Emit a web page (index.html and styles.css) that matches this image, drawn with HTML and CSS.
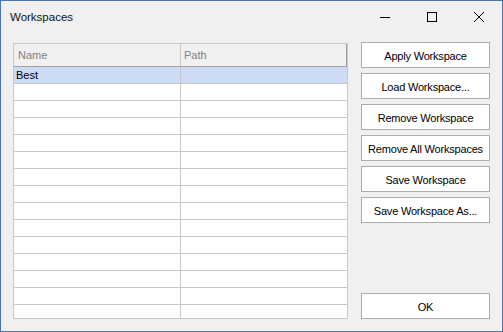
FILE: index.html
```html
<!DOCTYPE html>
<html lang="en">
<head>
  <meta charset="UTF-8" />
  <title>Workspaces</title>
  <link rel="stylesheet" href="styles.css">
</head>
<body>
  <div class="window">
    <div class="titlebar">
      <div class="title">Workspaces</div>
      <div class="caption-btn">
        <svg width="10" height="10" viewBox="0 0 10 10"><path d="M0 5.5H10" stroke="#000" stroke-width="1"/></svg>
      </div>
      <div class="caption-btn">
        <svg width="10" height="10" viewBox="0 0 10 10"><rect x="0.5" y="0.5" width="9" height="9" fill="none" stroke="#000" stroke-width="1"/></svg>
      </div>
      <div class="caption-btn">
        <svg width="10" height="10" viewBox="0 0 10 10"><path d="M0 0L10 10M10 0L0 10" stroke="#000" stroke-width="1"/></svg>
      </div>
    </div>

    <div class="content">
      <div class="grid">
        <div class="grid-head">
          <div class="cell first">Name</div>
          <div class="cell">Path</div>
        </div>
        <div class="grid-body">
          <div class="row selected"><div class="cell first">Best</div><div class="cell"></div></div>
          <div class="row"><div class="cell first"></div><div class="cell"></div></div>
          <div class="row"><div class="cell first"></div><div class="cell"></div></div>
          <div class="row"><div class="cell first"></div><div class="cell"></div></div>
          <div class="row"><div class="cell first"></div><div class="cell"></div></div>
          <div class="row"><div class="cell first"></div><div class="cell"></div></div>
          <div class="row"><div class="cell first"></div><div class="cell"></div></div>
          <div class="row"><div class="cell first"></div><div class="cell"></div></div>
          <div class="row"><div class="cell first"></div><div class="cell"></div></div>
          <div class="row"><div class="cell first"></div><div class="cell"></div></div>
          <div class="row"><div class="cell first"></div><div class="cell"></div></div>
          <div class="row"><div class="cell first"></div><div class="cell"></div></div>
          <div class="row"><div class="cell first"></div><div class="cell"></div></div>
          <div class="row"><div class="cell first"></div><div class="cell"></div></div>
          <div class="row"><div class="cell first"></div><div class="cell"></div></div>
        </div>
      </div>

      <div class="side">
        <button class="btn">Apply Workspace</button>
        <button class="btn">Load Workspace...</button>
        <button class="btn">Remove Workspace</button>
        <button class="btn">Remove All Workspaces</button>
        <button class="btn">Save Workspace</button>
        <button class="btn">Save Workspace As...</button>
        <button class="btn ok">OK</button>
      </div>
    </div>
  </div>
</body>
</html>
```

FILE: styles.css
```css
html, body {
  margin: 0;
  padding: 0;
  background: #f0f0f0;
  font-family: "Liberation Sans", Arial, sans-serif;
  font-size: 11px;
  color: #000;
}

.window {
  width: 503px;
  height: 332px;
  box-sizing: border-box;
  border: 1px solid #4f74b0;
  background: #f0f0f0;
  display: flex;
  flex-direction: column;
}

.titlebar {
  height: 31px;
  display: flex;
  align-items: center;
}

.title {
  flex: 1;
  padding-left: 9px;
  font-size: 11.5px;
  color: #111;
}

.caption-btn {
  width: 47px;
  height: 31px;
  display: flex;
  align-items: center;
  justify-content: center;
}

.caption-btn svg {
  display: block;
  shape-rendering: crispEdges;
}

.content {
  flex: 1;
  display: flex;
  gap: 13px;
  padding: 10px 12px 12px 12px;
  min-height: 0;
}

.grid {
  width: 335px;
  margin-top: 1px;
  box-sizing: border-box;
  border: 1px solid #c8c8c8;
  background: #fff;
  display: flex;
  flex-direction: column;
  overflow: hidden;
}

.grid-head {
  display: flex;
  height: 23px;
  flex-shrink: 0;
  box-sizing: border-box;
  background: #f0f0f0;
  border-bottom: 1px solid #a0a0a0;
  color: #808080;
}

.grid-head .cell {
  line-height: 22px;
  padding-left: 4px;
}

.grid-head .cell:last-child {
  border-right: 1px solid #a0a0a0;
  padding-left: 3px;
}

.grid-body {
  flex: 1;
  overflow: hidden;
}

.row {
  display: flex;
  height: 17px;
  box-sizing: border-box;
  border-bottom: 1px solid #c8c8c8;
}

.row .cell {
  line-height: 16px;
  padding-left: 2px;
}

.row.selected {
  background: #cddbf4;
}

.cell {
  flex: 1;
  box-sizing: border-box;
  white-space: nowrap;
}

.cell.first {
  flex: none;
  width: 167px;
  border-right: 1px solid #c8c8c8;
}

.side {
  width: 129px;
  display: flex;
  flex-direction: column;
  gap: 5px;
}

.btn {
  height: 26px;
  box-sizing: border-box;
  background: #fff;
  border: 1px solid #adadad;
  font-family: "Liberation Sans", Arial, sans-serif;
  font-size: 11px;
  letter-spacing: -0.2px;
  color: #000;
  padding: 2px 0 0 0;
}

.btn.ok {
  margin-top: auto;
}
```
